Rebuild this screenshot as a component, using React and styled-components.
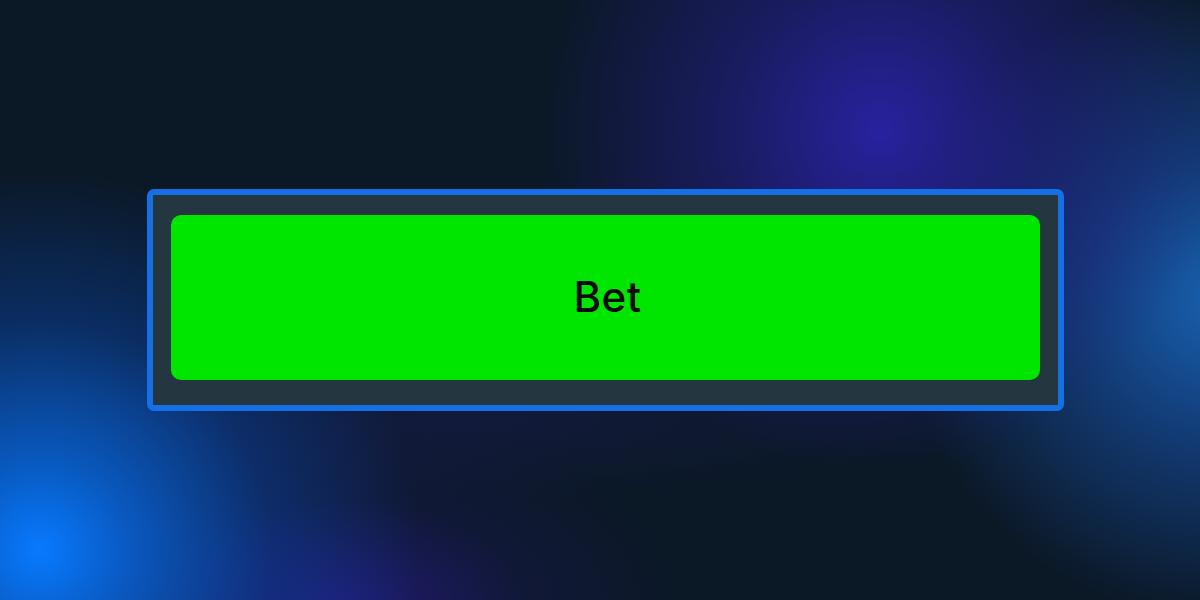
import styled, { createGlobalStyle } from "styled-components";

const GlobalStyle = createGlobalStyle`
  html, body {
    margin: 0;
    padding: 0;
    background: #0b1826;
  }
`;

const Stage = styled.div`
  width: 1200px;
  height: 600px;
  overflow: hidden;
  display: flex;
  align-items: flex-start;
  justify-content: center;
  padding-top: 189px;
  padding-left: 11px;
  box-sizing: border-box;
  background:
    radial-gradient(circle at 40px 550px, rgba(8, 122, 255, 1) 0px, rgba(8, 110, 240, 0.75) 90px, rgba(10, 70, 170, 0.45) 230px, rgba(10, 40, 110, 0) 380px),
    radial-gradient(circle at 880px 130px, rgba(42, 34, 165, 0.95) 0px, rgba(34, 30, 130, 0.6) 160px, rgba(20, 24, 80, 0) 340px),
    radial-gradient(ellipse 320px 320px at 1220px 300px, rgba(24, 96, 176, 1) 0px, rgba(22, 76, 156, 0.65) 45%, rgba(14, 40, 90, 0) 100%),
    radial-gradient(ellipse 340px 200px at 340px 610px, rgba(34, 26, 120, 0.95), rgba(24, 24, 80, 0.4) 55%, rgba(20, 20, 70, 0) 100%),
    radial-gradient(ellipse 500px 80px at 450px 420px, rgba(24, 28, 80, 0.5), rgba(20, 20, 70, 0) 100%),
    #0b1826;
`;

const Panel = styled.div`
  width: 917px;
  height: 222px;
  box-sizing: border-box;
  border: 6px solid #1570e6;
  border-radius: 7px;
  background: #243640;
  padding: 20px 18px 25px;
  display: flex;
`;

const BetButton = styled.button`
  flex: 1;
  border: none;
  border-radius: 10px;
  background: #00e600;
  color: #0a0a0a;
  font-family: Inter, "Noto Sans", sans-serif;
  font-size: 42px;
  font-weight: 500;
  letter-spacing: 0.5px;
  cursor: pointer;
  padding: 0 0 2px 4px;
`;

export default function App() {
  return (
    <>
      <GlobalStyle />
      <Stage>
        <Panel>
          <BetButton>Bet</BetButton>
        </Panel>
      </Stage>
    </>
  );
}
